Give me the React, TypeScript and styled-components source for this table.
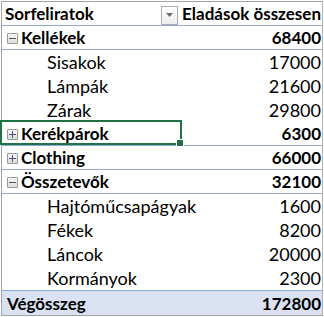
import React from "react";
import styled, { createGlobalStyle } from "styled-components";

const GlobalStyle = createGlobalStyle`
  html, body {
    margin: 0;
    padding: 0;
    background: #ffffff;
  }
  body {
    font-family: Lato, "Liberation Sans", sans-serif;
    color: #000000;
  }
`;

type Item = { label: string; value: number };
type Group = { label: string; value: number; open: boolean; items: Item[] };

const groups: Group[] = [
  {
    label: "Kellékek",
    value: 68400,
    open: true,
    items: [
      { label: "Sisakok", value: 17000 },
      { label: "Lámpák", value: 21600 },
      { label: "Zárak", value: 29800 },
    ],
  },
  { label: "Kerékpárok", value: 6300, open: false, items: [] },
  { label: "Clothing", value: 66000, open: false, items: [] },
  {
    label: "Összetevők",
    value: 32100,
    open: true,
    items: [
      { label: "Hajtóműcsapágyak", value: 1600 },
      { label: "Fékek", value: 8200 },
      { label: "Láncok", value: 20000 },
      { label: "Kormányok", value: 2300 },
    ],
  },
];

const ToggleIcon = ({ open }: { open: boolean }) => (
  <Toggle>
    <svg width="7" height="7" viewBox="0 0 7 7">
      <rect x="0" y="3" width="7" height="1" fill="#44546a" />
      {!open && <rect x="3" y="0" width="1" height="7" fill="#44546a" />}
    </svg>
  </Toggle>
);

export default function App() {
  return (
    <>
      <GlobalStyle />
      <Frame>
        <HeaderRow>
          <HeaderLabel>
            Sorfeliratok
            <FilterButton>
              <svg width="7" height="4" viewBox="0 0 7 4">
                <path d="M0 0 H7 L3.5 4 Z" fill="#6d6d6d" />
              </svg>
            </FilterButton>
          </HeaderLabel>
          <HeaderValue>Eladások összesen</HeaderValue>
        </HeaderRow>
        {groups.map((g) => (
          <React.Fragment key={g.label}>
            <GroupRow>
              <Label>
                <ToggleIcon open={g.open} />
                {g.label}
              </Label>
              <Value $bold>{g.value}</Value>
              {g.label === "Kerékpárok" && (
                <Selection>
                  <Handle />
                </Selection>
              )}
            </GroupRow>
            {g.items.map((it) => (
              <ItemRow key={it.label}>
                <ItemLabel>{it.label}</ItemLabel>
                <Value>{it.value}</Value>
              </ItemRow>
            ))}
          </React.Fragment>
        ))}
        <TotalRow>
          <Label>Végösszeg</Label>
          <Value $bold>172800</Value>
        </TotalRow>
      </Frame>
    </>
  );
}

const Frame = styled.div`
  margin: 1px 0 0 1px;
  width: 322px;
  box-sizing: border-box;
  border: 1px solid #a3a3a3;
  border-right-color: #b4b4b4;
  display: flex;
  flex-direction: column;
  font-size: 17px;
`;

const RowBase = styled.div`
  position: relative;
  display: grid;
  grid-template-columns: 180px 1fr;
  align-items: center;
  height: 24px;
  box-sizing: border-box;
`;

const HeaderRow = styled(RowBase)`
  border-bottom: 1px solid #8eaadb;
  font-weight: 700;
`;

const HeaderLabel = styled.div`
  display: flex;
  align-items: center;
  justify-content: space-between;
  padding-left: 3px;
  padding-right: 4px;
`;

const FilterButton = styled.div`
  width: 17px;
  height: 19px;
  box-sizing: border-box;
  border: 1px solid #acacac;
  background: linear-gradient(#ffffff, #eeeeee);
  display: flex;
  align-items: center;
  justify-content: center;
  margin-top: 3px;
`;

const HeaderValue = styled.div`
  text-align: right;
  padding-right: 1px;
  white-space: nowrap;
`;

const GroupRow = styled(RowBase)`
  border-bottom: 1px solid #8eaadb;
  font-weight: 700;
`;

const ItemRow = styled(RowBase)`
  font-size: 18px;
`;

const TotalRow = styled(RowBase)`
  height: 25px;
  background: #d9e1f2;
  border-top: 1px solid #8eaadb;
  font-weight: 700;
`;

const Label = styled.div`
  display: flex;
  align-items: center;
  gap: 3px;
  padding-left: 5px;
  white-space: nowrap;
`;

const ItemLabel = styled.div`
  padding-left: 45px;
  white-space: nowrap;
`;

const Value = styled.div<{ $bold?: boolean }>`
  text-align: right;
  padding-right: 1px;
  font-weight: ${(p) => (p.$bold ? 700 : 400)};
`;

const Toggle = styled.span`
  width: 11px;
  height: 11px;
  box-sizing: border-box;
  border: 1px solid #9a9a9a;
  border-radius: 1px;
  background: linear-gradient(#f7f7f7, #dcdcdc);
  display: inline-flex;
  align-items: center;
  justify-content: center;
  margin-top: 1px;
`;

const Selection = styled.div`
  position: absolute;
  left: -2px;
  top: -2px;
  width: 182px;
  height: 25px;
  box-sizing: border-box;
  border: 2px solid #217346;
  pointer-events: none;
`;

const Handle = styled.div`
  position: absolute;
  right: -4px;
  bottom: -4px;
  width: 6px;
  height: 6px;
  background: #217346;
  border: 1px solid #ffffff;
`;
